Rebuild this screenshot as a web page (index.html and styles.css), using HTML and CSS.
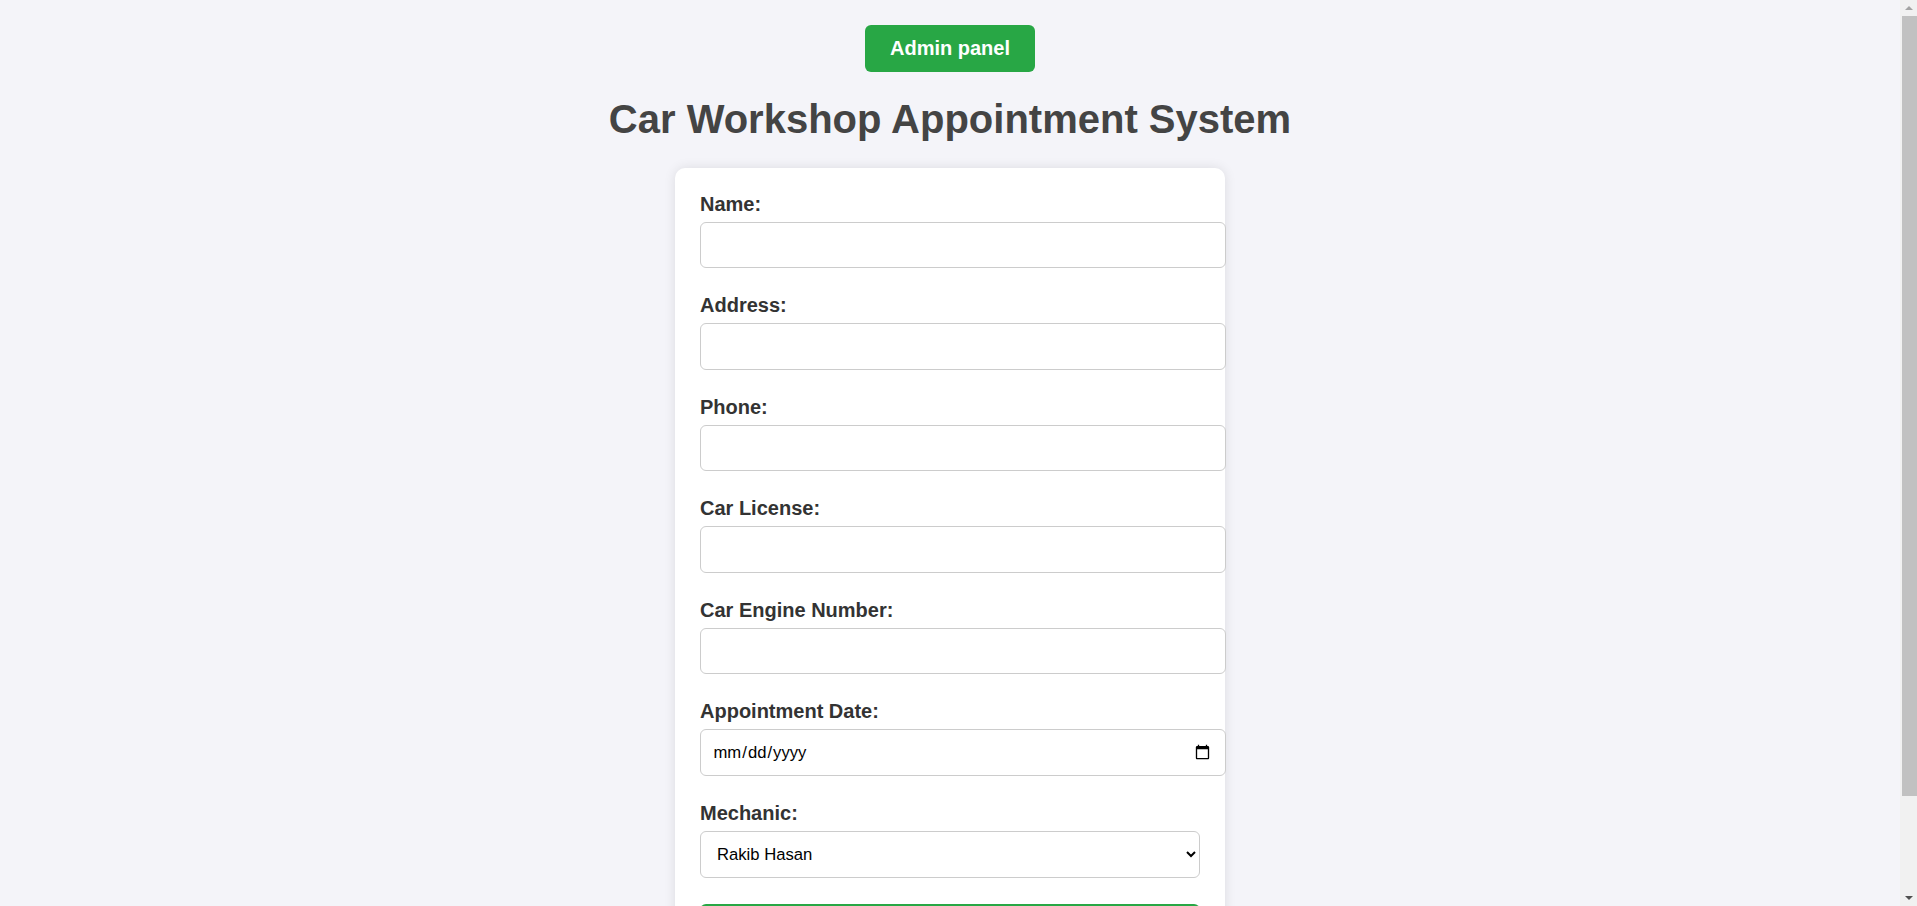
FILE: index.html
```html
<!DOCTYPE html>
<html lang="en">
<head>
<meta charset="utf-8">
<title>Car Workshop Appointment System</title>
<link rel="stylesheet" href="styles.css">
</head>
<body>
<div class="top">
  <a class="admin-btn" href="#">Admin panel</a>
</div>
<h1 class="title">Car Workshop Appointment System</h1>
<form class="card">
  <label class="label" for="name">Name:</label>
  <input class="field" type="text" id="name">
  <label class="label" for="address">Address:</label>
  <input class="field" type="text" id="address">
  <label class="label" for="phone">Phone:</label>
  <input class="field" type="text" id="phone">
  <label class="label" for="license">Car License:</label>
  <input class="field" type="text" id="license">
  <label class="label" for="engine">Car Engine Number:</label>
  <input class="field" type="text" id="engine">
  <label class="label" for="date">Appointment Date:</label>
  <input class="field field-date" type="date" id="date">
  <label class="label" for="mechanic">Mechanic:</label>
  <select class="select" id="mechanic">
    <option>Rakib Hasan</option>
    <option>Sakib Ahmed</option>
    <option>Tanvir Islam</option>
  </select>
  <button class="submit" type="submit">Book Appointment</button>
</form>
<div class="fake-scrollbar" aria-hidden="true">
  <span class="sb-arrow sb-up"></span>
  <span class="sb-thumb"></span>
  <span class="sb-arrow sb-down"></span>
</div>
</body>
</html>
```
FILE: styles.css
```css
html, body {
  margin: 0;
  padding: 0;
}
body {
  background: #f4f4f9;
  font-family: "Liberation Sans", Arial, sans-serif;
  color: #333;
  padding: 25px 17px 37px 0;
}
.top {
  display: flex;
  justify-content: center;
}
.admin-btn {
  display: inline-block;
  background: #28a745;
  color: #fff;
  font-size: 20px;
  font-weight: bold;
  line-height: 23px;
  padding: 12px 25px;
  border-radius: 6px;
  text-decoration: none;
}
.title {
  text-align: center;
  color: #444;
  font-size: 40px;
  line-height: 46px;
  margin: 24px 0 26px;
}
.card {
  width: 500px;
  margin: 0 auto;
  padding: 25px;
  background: #fff;
  border-radius: 10px;
  box-shadow: 0 0 12px rgba(0, 0, 0, 0.1);
  display: flex;
  flex-direction: column;
  align-items: flex-start;
}
.label {
  display: block;
  font-size: 20px;
  font-weight: bold;
  line-height: 23px;
  color: #333;
  margin-bottom: 6px;
}
.field {
  box-sizing: content-box;
  width: 100%;
  height: 19.4px;
  padding: 12.5px 12.5px 12.5px 11.5px;
  border: 1px solid #ccc;
  border-radius: 6px;
  font-family: "Liberation Sans", Arial, sans-serif;
  font-size: 16.67px;
  margin: 0 0 26px;
  background: #fff;
  color: #000;
  outline: none;
}
.field-date {
  height: 20.4px;
}
.select {
  box-sizing: border-box;
  width: 100%;
  height: 47px;
  padding: 0 12px;
  border: 1px solid #ccc;
  border-radius: 6px;
  font-family: "Liberation Sans", Arial, sans-serif;
  font-size: 16.67px;
  margin: 0 0 26px;
  background: #fff;
  color: #000;
}
.submit {
  width: 100%;
  height: 48px;
  background: #28a745;
  color: #fff;
  border: none;
  border-radius: 6px;
  font-family: "Liberation Sans", Arial, sans-serif;
  font-size: 20px;
  font-weight: bold;
  cursor: pointer;
}
.fake-scrollbar {
  position: fixed;
  top: 0;
  right: 0;
  width: 17px;
  height: 100vh;
  background: #f1f1f1;
  display: flex;
  flex-direction: column;
  align-items: center;
}
.sb-arrow {
  width: 0;
  height: 0;
  border-left: 4px solid transparent;
  border-right: 4px solid transparent;
  flex: none;
}
.sb-up {
  border-bottom: 4px solid #a3a3a3;
  margin: 6px 0 6px;
}
.sb-down {
  border-top: 4px solid #505050;
  margin: auto 0 6px;
}
.sb-thumb {
  width: 15px;
  height: 780px;
  margin-left: 2px;
  background: #c1c1c1;
  flex: none;
}
```
